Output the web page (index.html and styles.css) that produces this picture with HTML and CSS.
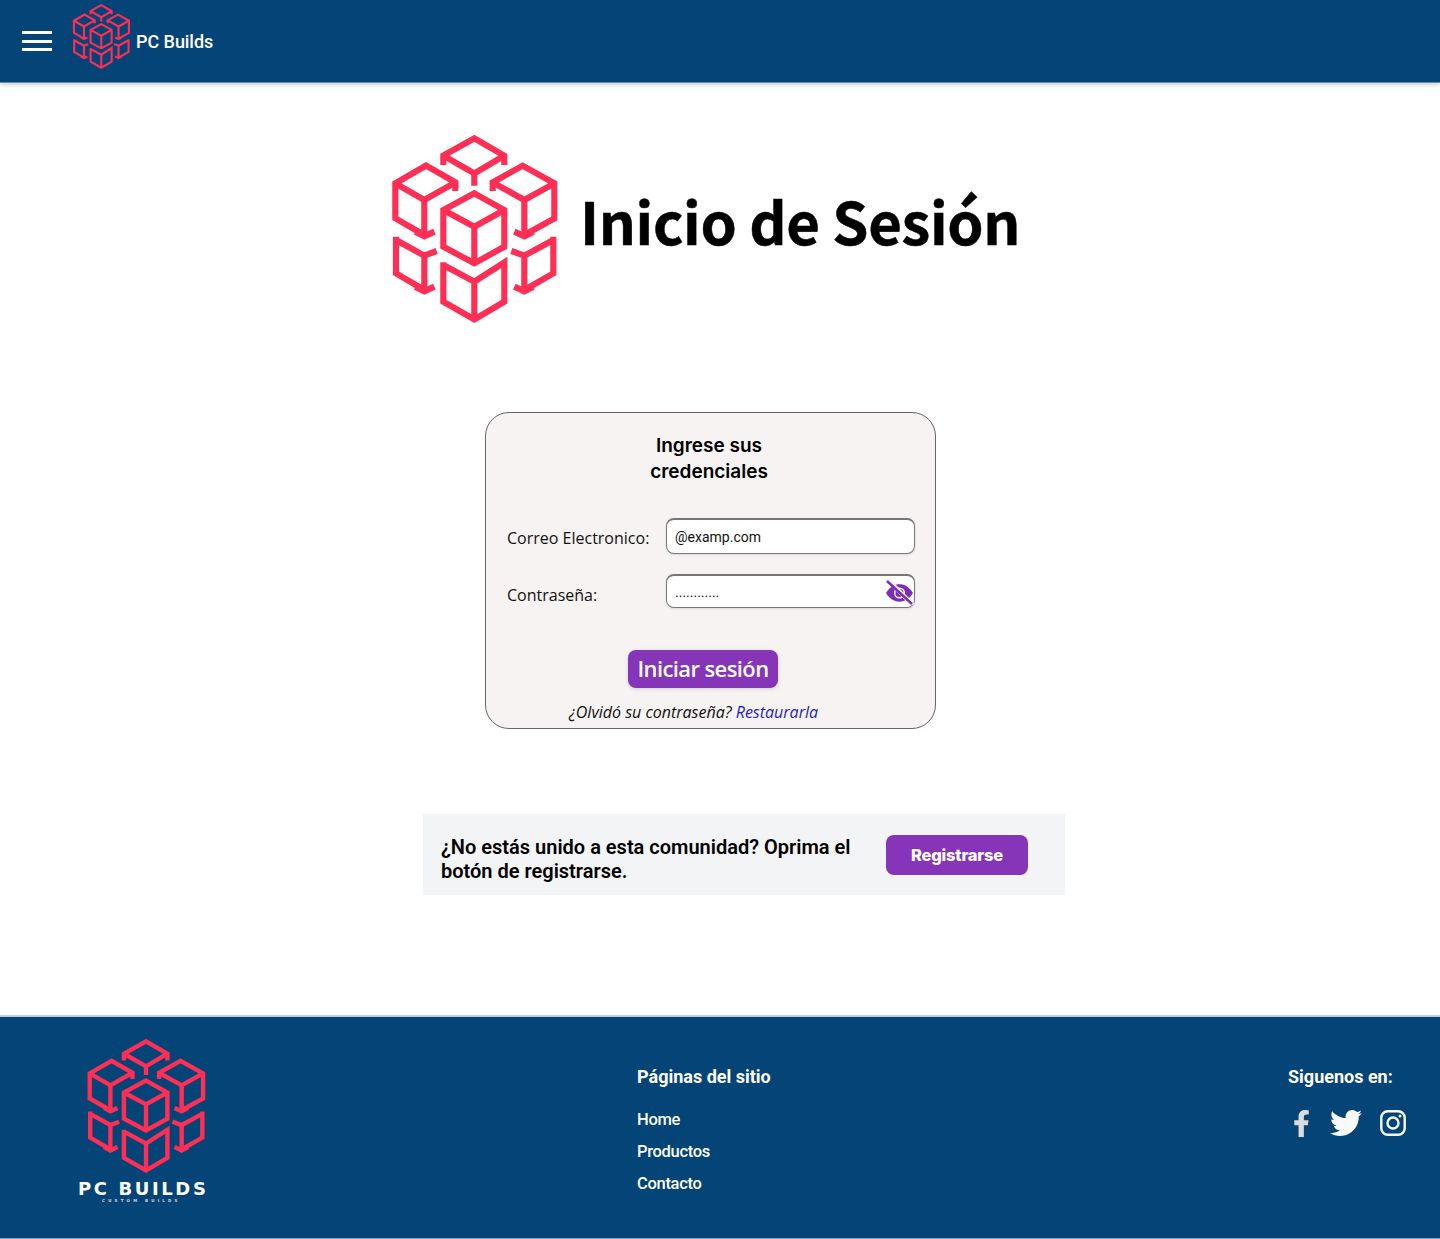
FILE: index.html
```html
<!DOCTYPE html>
<html lang="es">
<head>
<meta charset="utf-8">
<title>Inicio de Sesión</title>
<link rel="stylesheet" href="styles.css">
</head>
<body>
<svg class="defs" width="0" height="0" aria-hidden="true">
  <symbol id="cubes" viewBox="38 30 498 564">
    <g fill="none" stroke="#ff2e55" stroke-width="18.500" stroke-linejoin="miter" stroke-linecap="butt">
      <path d="M192 120V92L285 40L375 92V120M192 92L285 145L375 92M285 145V182"/>
      <path d="M285 205L375 255V365L285 415L192 365V255ZM192 255L285 305L375 255M285 305V415"/>
      <path d="M228 198V172L140 122L48 175V280L135 330M48 175L135 225L228 172M135 225V330M108 320L135 334L165 320"/>
      <path d="M340 198V172L430 122L525 175V280L435 330M525 175L435 225L340 172M435 225V330M405 320L435 334L462 320"/>
      <path d="M50 335V445L135 495M50 345L135 392L172 378M135 392V495M108 485L135 499L165 485"/>
      <path d="M522 335V445L435 495M522 345L435 392L396 378M435 392V495M405 485L435 499L462 485"/>
      <path d="M192 412V530L285 583L375 530V412L285 470L192 420M285 470V583"/>
    </g>
  </symbol>
</svg>

<header class="topbar">
  <button class="burger" type="button" aria-label="Menú"><span></span><span></span><span></span></button>
  <svg class="logo-small"><use href="#cubes"/></svg>
  <span class="brand">PC Builds</span>
</header>

<main class="main">
  <section class="title-row">
    <svg class="logo-big"><use href="#cubes"/></svg>
    <h1 class="title">Inicio de Sesión</h1>
  </section>

  <form class="card">
    <h2 class="card-title">Ingrese sus<br>credenciales</h2>
    <div class="field field-mail">
      <label class="label" for="mail">Correo Electronico:</label>
      <input class="input" id="mail" type="text" placeholder="@examp.com">
    </div>
    <div class="field field-pass">
      <label class="label" for="pass">Contraseña:</label>
      <div class="pass-box">
        <input class="input" id="pass" type="text" placeholder="............">
        <svg class="eye" viewBox="0 0 30 26">
          <path d="M1 13.5C5 7 10 4.5 15 4.500S25 7 29 13.500C25 20 20 22.500 15 22.500S5 20 1 13.500Z" fill="#7f2cb5"/>
          <circle cx="15" cy="13.500" r="5" fill="none" stroke="#fff" stroke-width="1.500"/>
          <path d="M3 0L29 26" stroke="#fff" stroke-width="4.500"/>
          <path d="M2 1L28 25" stroke="#7f2cb5" stroke-width="2.600"/>
        </svg>
      </div>
    </div>
    <button class="btn-login" type="button">Iniciar sesión</button>
    <p class="forgot">¿Olvidó su contraseña? <a class="forgot-link" href="#">Restaurarla</a></p>
  </form>

  <section class="join">
    <p class="join-text">¿No estás unido a esta comunidad? Oprima el botón de registrarse.</p>
    <button class="btn-join" type="button">Registrarse</button>
  </section>
</main>

<footer class="footer">
  <div class="foot-logo">
    <svg class="logo-foot"><use href="#cubes"/></svg>
    <div class="foot-name">PC BUILDS</div>
    <div class="foot-sub">CUSTOM BUILDS</div>
  </div>
  <nav class="foot-nav">
    <h3 class="foot-head">Páginas del sitio</h3>
    <a class="foot-link" href="#">Home</a>
    <a class="foot-link" href="#">Productos</a>
    <a class="foot-link" href="#">Contacto</a>
  </nav>
  <div class="foot-social">
    <h3 class="foot-head">Siguenos en:</h3>
    <div class="icons">
      <svg class="ic-f" viewBox="0 0 320 512"><path fill="#dcdcdc" d="M279.14 288l14.22-92.66h-88.91v-60.13c0-25.35 12.42-50.06 52.24-50.06h40.42V6.26S260.43 0 225.36 0c-73.22 0-121.08 44.38-121.08 124.72v70.62H22.89V288h81.39v224h100.17V288z"/></svg>
      <svg class="ic-t" viewBox="0 0 512 512"><path fill="#faf9f9" d="M459.37 151.716c.325 4.548.325 9.097.325 13.645 0 138.72-105.583 298.558-298.558 298.558-59.452 0-114.68-17.219-161.137-47.106 8.447.974 16.568 1.299 25.34 1.299 49.055 0 94.213-16.568 130.274-44.832-46.132-.975-84.792-31.188-98.112-72.772 6.498.974 12.995 1.624 19.818 1.624 9.421 0 18.843-1.3 27.614-3.573-48.081-9.747-84.143-51.98-84.143-102.985v-1.299c13.969 7.797 30.214 12.67 47.431 13.319-28.264-18.843-46.781-51.005-46.781-87.391 0-19.492 5.197-37.36 14.294-52.954 51.655 63.675 129.3 105.258 216.365 109.807-1.624-7.797-2.599-15.918-2.599-24.04 0-57.828 46.782-104.934 104.934-104.934 30.213 0 57.502 12.67 76.67 33.137 23.715-4.548 46.456-13.32 66.599-25.34-7.798 24.366-24.366 44.833-46.132 57.827 21.117-2.273 41.584-8.122 60.426-16.243-14.292 20.791-32.161 39.308-52.628 54.253z"/></svg>
      <svg class="ic-i" viewBox="0 0 26 26"><rect x="1.300" y="1.300" width="23.400" height="23.400" rx="6.500" fill="none" stroke="#faf9f9" stroke-width="2.400"/><circle cx="13" cy="13" r="5.500" fill="none" stroke="#faf9f9" stroke-width="2.400"/><circle cx="20" cy="6" r="1.500" fill="#faf9f9"/></svg>
    </div>
  </div>
</footer>
</body>
</html>
```
FILE: styles.css
```css
* { box-sizing: border-box; }
html, body { margin: 0; padding: 0; }
body { font-family: "Roboto", sans-serif; background: #fff; color: #000; }
.defs { position: absolute; }

.topbar {
  height: 83px;
  background: #054476;
  display: flex;
  align-items: center;
  padding-left: 22px;
  border-bottom: 1px solid #5f8cb0;
  box-shadow: 0 2px 4px rgba(0,0,0,.18);
}
.burger {
  width: 30px; height: 20px; padding: 0; border: 0; background: none;
  display: flex; flex-direction: column; justify-content: space-between;
  margin-right: 20px;
}
.burger span { display: block; height: 3px; background: #fff; }
.logo-small { width: 59px; height: 65px; margin-right: 5px; align-self: flex-start; margin-top: 4px; }
.brand { color: #fff; font-size: 18px; font-weight: 500; letter-spacing: -.05px; }

.main { display: flex; flex-direction: column; height: 932px; }
.title-row { display: flex; align-items: center; margin: 52px 0 0 392px; height: 188px; }
.logo-big { width: 166px; height: 188px; margin-right: 22px; }
.title {
  margin: 0; font-family: "Noto Sans CJK SC", "Noto Sans", sans-serif;
  font-size: 58px; font-weight: 700; line-height: 1; letter-spacing: -.35px;
  -webkit-text-stroke: .5px #000;
  position: relative; top: -9px;
}

.card {
  width: 451px; height: 317px; margin: 89px 0 0 485px;
  background: #f6f3f2; border: 1px solid #666; border-radius: 24px;
  display: flex; flex-direction: column; padding: 20px 20px 0 21px;
}
.card-title {
  margin: 0; text-align: center; font-family: "Inter", sans-serif;
  font-size: 19px; font-weight: 600; line-height: 26px; padding-right: 4px;
}
.field { display: flex; align-items: center; }
.field-mail { margin-top: 33px; height: 36px; }
.field-pass { margin-top: 20px; height: 34px; }
.label { width: 159px; font-family: "Open Sans", sans-serif; font-size: 16px; color: #111; flex: none; position: relative; top: 2px; }
.field-pass .label { top: 4px; }
.input {
  width: 249px; height: 100%; border: 1px solid #777; border-top-width: 2px; border-radius: 8px;
  padding: 0 8px; background: #fff; font: 14px "Roboto", sans-serif; color: #000;
  box-shadow: 0 1px 3px rgba(0,0,0,.1); outline: 0;
}
.input::placeholder { color: #111; opacity: 1; }
.pass-box { position: relative; width: 249px; height: 100%; }
.eye { position: absolute; right: 1px; top: 6px; width: 29px; height: 25px; }

.btn-login {
  align-self: flex-start; margin: 42px 0 0 121px; width: 150px; height: 38px;
  border: 0; border-radius: 8px; background: #8634b8; color: #fff;
  font: 600 22px "Open Sans", sans-serif; padding: 0 0 3px; letter-spacing: -.6px;
  box-shadow: 0 1px 4px rgba(0,0,0,.15);
}
.forgot {
  margin: 13px 0 0; font: italic 16px "Open Sans", sans-serif; line-height: 22px; color: #111;
  padding-left: 62px; white-space: nowrap;
}
.forgot-link { color: #1d1dc8; text-decoration: none; }

.join {
  width: 642px; height: 81px; margin: 85px 0 0 423px; background: #f3f4f6;
  display: flex; align-items: center; padding: 0 0 0 18px;
}
.join-text { margin: 8px 0 0; width: 445px; flex: none; font-size: 20px; font-weight: 600; line-height: 24px; }
.btn-join {
  width: 142px; height: 40px; border: 0; border-radius: 8px; background: #8634b8; color: #fff;
  margin: 1px 0 0; font: 800 16.500px "Inter", sans-serif; letter-spacing: -.2px; padding: 0;
}

.footer {
  height: 224px; background: #054476; border-top: 2px solid #c4ced6; border-bottom: 1px solid #7fa3c0;
  display: flex; position: relative;
}
.foot-logo { width: 637px; padding: 22px 0 0 78px; flex: none; color: #fff; }
.logo-foot { display: block; width: 119px; height: 134px; margin-left: 9px; }
.foot-name { font: 700 18px "DejaVu Sans", sans-serif; letter-spacing: 2.600px; line-height: 18px; margin-top: 7px; width: 130px; white-space: nowrap; }
.foot-sub { font: 700 4px "DejaVu Sans", sans-serif; letter-spacing: 3.200px; line-height: 4px; padding: 1px 0 0 24px; opacity: .8; white-space: nowrap; }
.foot-nav { width: 651px; flex: none; padding-top: 49px; display: flex; flex-direction: column; align-items: flex-start; }
.foot-head { margin: 0; color: #fff; font-size: 18px; font-weight: 700; line-height: 21px; }
.foot-link { color: #fff; text-decoration: none; font-size: 16.500px; font-weight: 500; line-height: 20px; margin-top: 12px; letter-spacing: -.3px; }
.foot-nav .foot-head { margin-bottom: 11px; }
.foot-social { padding-top: 49px; }
.icons { display: flex; align-items: center; margin-top: 20px; margin-left: 5px; }
.ic-f { width: 17px; height: 27px; }
.ic-t { width: 32px; height: 32px; margin-left: 20px; }
.ic-i { width: 26px; height: 26px; margin-left: 18px; }
```
